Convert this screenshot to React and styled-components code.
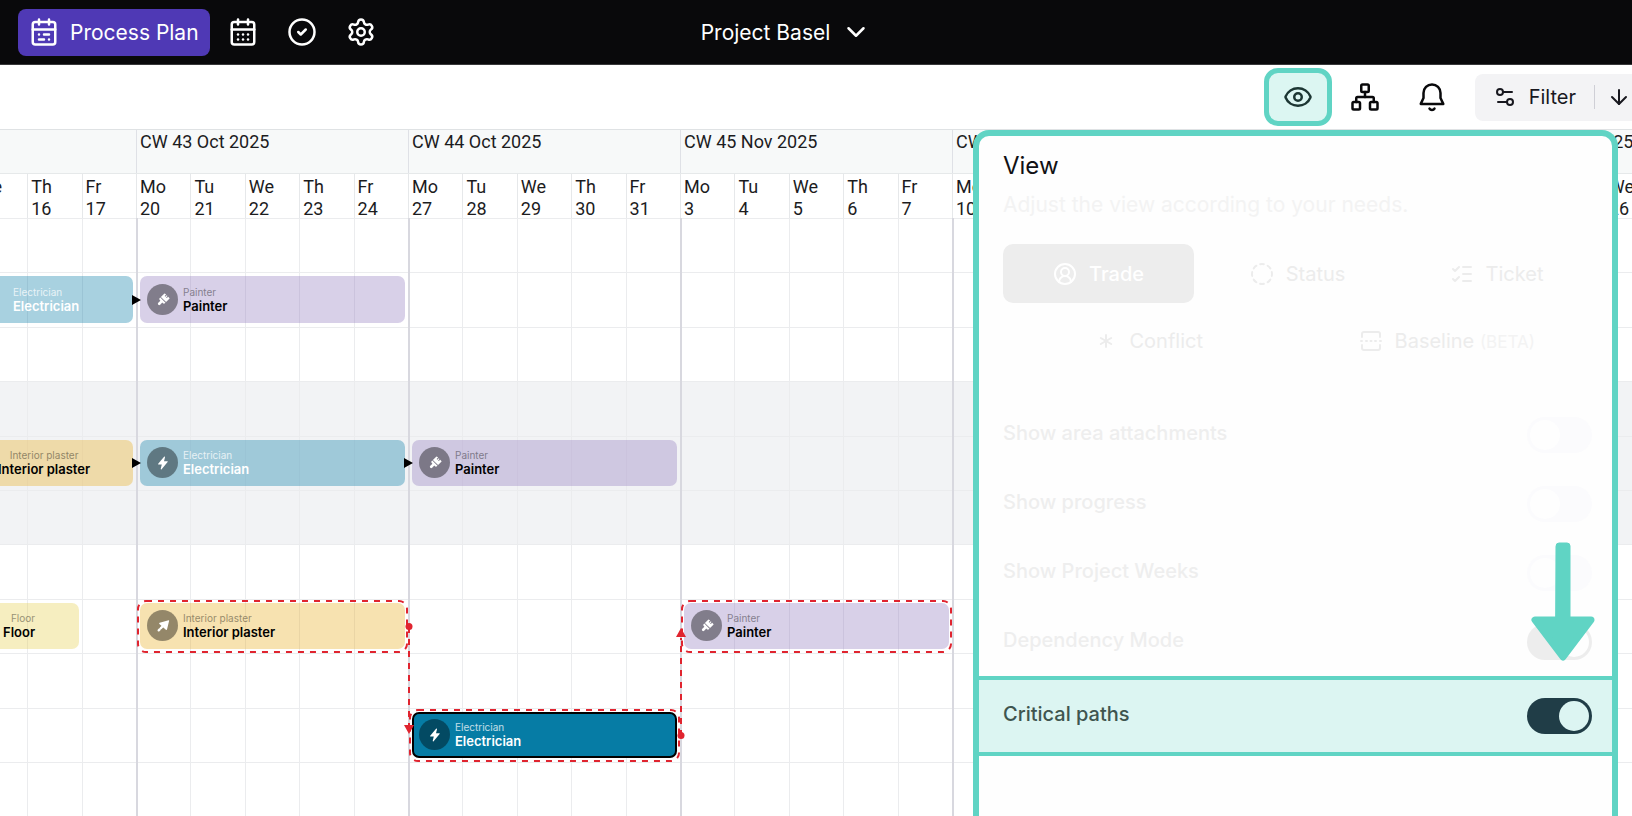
import React, {useState} from "react";
import styled, {createGlobalStyle} from "styled-components";
import {
    ArrowDown,
    Asterisk,
    CalendarDays,
    ChevronDown,
    CircleCheck,
    CircleDashed,
    CircleUserRound,
    Eye,
    ListChecks,
    Network,
    Settings,
    Settings2,
} from "lucide-react";

const TEAL = "#60d4c4";
const RED = "#e0242f";

const WEEKS = [
    {label: "CW 42 Oct 2025", dates: [13, 14, 15, 16, 17]},
    {label: "CW 43 Oct 2025", dates: [20, 21, 22, 23, 24]},
    {label: "CW 44 Oct 2025", dates: [27, 28, 29, 30, 31]},
    {label: "CW 45 Nov 2025", dates: [3, 4, 5, 6, 7]},
    {label: "CW 46 Nov 2025", dates: [10, 11, 12, 13, 14]},
    {label: "CW 47 Nov 2025", dates: [17, 18, 19, 20, 21]},
    {label: "CW 48 Nov 2025", dates: [24, 25, 26, 27, 28]},
];
const DAYS = ["Mo", "Tu", "We", "Th", "Fr"];
const ROWS = Array.from({length: 15}, (_, i) => i + 1);
const SHADED_ROWS = [4, 5, 6];

const TRADES = {
    electrician: {name: "Electrician", color: "6, 124, 165", text: "#ffffff", icon: "bolt"},
    painter: {name: "Painter", color: "144, 121, 189", text: "#000000", icon: "brush"},
    plaster: {name: "Interior plaster", color: "232, 172, 29", text: "#000000", icon: "trowel"},
    floor: {name: "Floor", color: "229, 206, 75", text: "#000000", icon: null},
};

// column and span count working days, inset is set where the bar starts off screen
const TASKS = [
    {trade: "electrician", row: 2, column: 1, span: 5, inset: 145, align: "flex-start"},
    {trade: "painter", row: 2, column: 6, span: 5},
    {trade: "plaster", row: 5, column: 1, span: 5, inset: 130, align: "center"},
    {trade: "electrician", row: 5, column: 6, span: 5},
    {trade: "painter", row: 5, column: 11, span: 5},
    {trade: "floor", row: 8, column: 1, span: 4, inset: 135, align: "flex-end"},
    {trade: "plaster", row: 8, column: 6, span: 5},
    {trade: "painter", row: 8, column: 16, span: 5},
    {trade: "electrician", row: 10, column: 11, span: 5, selected: true},
];

const TASK_ICONS = {
    bolt: <path d="M13.6 2.6 4.8 13.2c-.4.5-.1 1.1.5 1.1h4.900l-1.600 6.300c-.2.9.7 1.400 1.300.7l9-10.700c.4-.5.1-1.100-.5-1.100h-4.900l1.500-6.200c.2-.9-.8-1.400-1.400-.7Z"/>,
    brush: (
        <g transform="rotate(45 12 12)">
            <path d="M6.500 4a1 1 0 0 1 1-1h2v3h1.500V3h1.500v3H14V3h2.500a1 1 0 0 1 1 1v7h-11Z"/>
            <path d="M6.500 12.200h11v1.300a2 2 0 0 1-2 2h-1.500v4.500a2 2 0 0 1-4 0v-4.500H8.500a2 2 0 0 1-2-2Z"/>
        </g>
    ),
    trowel: (
        <>
            <path d="M20.400 3.400c.5-.1.9.3.8.8l-3.200 13.200c-.2.8-1.100 1-1.700.4L6.600 8.900c-.6-.6-.4-1.500.4-1.700Z"/>
            <path d="m12 12-3.200 3.200M7 17l-1.500 1.500" stroke="#ffffff" strokeWidth="3.400" strokeLinecap="round"/>
        </>
    ),
};

const CalendarPlanIcon = () => (
    <Stroke viewBox="0 0 24 24" $size={30}>
        <path d="M8 2v4M16 2v4M3 10h18"/>
        <rect x="3" y="4" width="18" height="18" rx="2"/>
        <path d="M8 14h.01M12 14h4M8 18h4M16 18h.01"/>
    </Stroke>
);

const BellIcon = () => (
    <Stroke viewBox="0 0 24 24" $size={30}>
        <path d="M3 17.500h18l-2.200-4.700V8.800a6.800 6.800 0 0 0-13.600 0v4Z"/>
        <path d="M10 21.300a2.300 2.300 0 0 0 4 0"/>
    </Stroke>
);

const BaselineIcon = () => (
    <Stroke viewBox="0 0 24 24" $size={24}>
        <path d="M3 8V5a2 2 0 0 1 2-2h14a2 2 0 0 1 2 2v3M3 16v3a2 2 0 0 0 2 2h14a2 2 0 0 0 2-2v-3"/>
        <path d="M2 12h1M7 12h1M11.500 12h1M16 12h1M21 12h1"/>
    </Stroke>
);

const Task = ({trade, row, column, span, inset, align, selected}) => {
    const {name, color, text, icon} = TRADES[trade];

    return (
        <Bar
            $row={row}
            $column={column}
            $span={span}
            $color={color}
            $text={text}
            $inset={inset}
            $selected={selected}
        >
            {!inset && (
                <TaskBadge>
                    <svg viewBox="0 0 24 24" width="16" height="16" fill="#ffffff">
                        {TASK_ICONS[icon]}
                    </svg>
                </TaskBadge>
            )}
            <Caption $align={align}>
                <TradeName $light={text === "#ffffff"}>{name}</TradeName>
                <TaskName>{name}</TaskName>
            </Caption>
        </Bar>
    );
};

const Dependencies = () => (
    <Links viewBox="0 0 1904 816">
        <path d="M268 77v10l9-5ZM268 240v10l9-5ZM540 240v10l9-5Z" fill="#000000"/>
        <g fill="none" stroke={RED} strokeWidth="2" strokeDasharray="6 6">
            <rect x="274" y="383" width="269" height="51" rx="8"/>
            <rect x="818" y="383" width="269" height="51" rx="8"/>
            <rect x="546" y="492" width="269" height="51" rx="8"/>
            <path d="M545 409v98M817 518v-98"/>
        </g>
        <g fill={RED}>
            <circle cx="545" cy="408.500" r="3.500"/>
            <circle cx="817" cy="517.500" r="3.500"/>
            <path d="M540 507h10l-5 9ZM812 419h10l-5-9Z"/>
        </g>
    </Links>
);

const Setting = ({id, label, checked, onChange, focus}) => (
    <SettingRow $focus={focus}>
        <SettingLabel htmlFor={id} $focus={focus}>{label}</SettingLabel>
        <Toggle id={id} type="checkbox" checked={checked} onChange={onChange} $focus={focus}/>
    </SettingRow>
);

const ViewPanel = () => {
    const [settings, setSettings] = useState({
        attachments: false,
        progress: false,
        weeks: false,
        dependency: true,
        critical: true,
    });
    const bind = (id) => ({
        id,
        checked: settings[id],
        onChange: () => setSettings({...settings, [id]: !settings[id]}),
    });

    return (
        <Panel>
            <PanelTop>
                <PanelTitle>View</PanelTitle>
                <PanelText>Adjust the view according to your needs.</PanelText>
                <Modes>
                    <Mode $active><CircleUserRound size={24}/>Trade</Mode>
                    <Mode><CircleDashed size={24}/>Status</Mode>
                    <Mode><ListChecks size={24}/>Ticket</Mode>
                    <Mode $wide><Asterisk size={24}/>Conflict</Mode>
                    <Mode $wide><BaselineIcon/><span>Baseline <Beta>(BETA)</Beta></span></Mode>
                </Modes>
            </PanelTop>
            <Setting {...bind("attachments")} label="Show area attachments"/>
            <Setting {...bind("progress")} label="Show progress"/>
            <Setting {...bind("weeks")} label="Show Project Weeks"/>
            <Setting {...bind("dependency")} label="Dependency Mode"/>
            <Setting {...bind("critical")} label="Critical paths" focus/>
            <Pointer viewBox="0 0 64 120">
                <path d="M25 10a3 3 0 0 1 3-3h8a3 3 0 0 1 3 3v75H25Z" strokeWidth="1"/>
                <path d="M4 84h56L32 121Z" strokeWidth="7"/>
            </Pointer>
        </Panel>
    );
};

const App = () => (
    <Page>
        <GlobalStyle/>
        <TopBar>
            <Nav>
                <NavButton $active><CalendarPlanIcon/>Process Plan</NavButton>
                <NavButton aria-label="Calendar"><CalendarDays size={30}/></NavButton>
                <NavButton aria-label="Tasks"><CircleCheck size={30}/></NavButton>
                <NavButton aria-label="Settings"><Settings size={30}/></NavButton>
            </Nav>
            <ProjectButton>Project Basel<ChevronDown size={30}/></ProjectButton>
        </TopBar>
        <Toolbar>
            <ToolButton aria-label="View"><Highlight/><Eye size={30}/></ToolButton>
            <ToolButton aria-label="Structure"><Network size={30}/></ToolButton>
            <ToolButton aria-label="Notifications"><BellIcon/></ToolButton>
            <FilterGroup>
                <FilterButton><Settings2 size={24}/>Filter</FilterButton>
                <Divider/>
                <SortButton aria-label="Sort"><ArrowDown size={24}/></SortButton>
            </FilterGroup>
        </Toolbar>
        <Content>
            <Timeline>
                <WeekHeader>
                    {WEEKS.map(({label}) => <Week key={label}>{label}</Week>)}
                </WeekHeader>
                <DayHeader>
                    {WEEKS.map(({dates}) => dates.map((date, i) => (
                        <Day key={DAYS[i] + date}>
                            <span>{DAYS[i]}</span>
                            <span>{date}</span>
                        </Day>
                    )))}
                </DayHeader>
                <Chart>
                    {ROWS.map((row) => <RowLine key={row} $row={row} $shaded={SHADED_ROWS.includes(row)}/>)}
                    {WEEKS.map(({dates}, week) => dates.map((date, i) => (
                        <ColumnLine key={week + "-" + date} $column={week * 5 + i + 1} $first={i === 0}/>
                    )))}
                    {TASKS.map((task) => <Task key={task.row + "-" + task.column} {...task}/>)}
                    <Dependencies/>
                </Chart>
            </Timeline>
            <ViewPanel/>
        </Content>
    </Page>
);

const GlobalStyle = createGlobalStyle`
  * {
    box-sizing: border-box;
  }

  body {
    margin: 0;
    background: #ffffff;
    font-family: Inter, "Liberation Sans", sans-serif;
  }

  button {
    padding: 0;
    border: none;
    background: none;
    color: inherit;
    font: inherit;
  }

  svg {
    flex: none;
  }
`;

const Page = styled.div`
  display: flex;
  flex-direction: column;
  height: 100vh;
  overflow: hidden;
`;

const Stroke = styled.svg`
  width: ${({$size}) => $size}px;
  height: ${({$size}) => $size}px;
  fill: none;
  stroke: currentColor;
  stroke-width: 2;
  stroke-linecap: round;
  stroke-linejoin: round;
`;

const TopBar = styled.header`
  display: grid;
  grid-template-columns: 1fr auto 1fr;
  align-items: center;
  flex: none;
  height: 65px;
  padding: 0 78px 0 18px;
  border-bottom: 1px solid #38383a;
  background: #09090b;
  color: #ffffff;
  font-size: 21px;
`;

const Nav = styled.nav`
  display: flex;
  align-items: center;
  gap: 7px;
`;

const NavButton = styled.button`
  display: flex;
  align-items: center;
  justify-content: center;
  gap: 11px;
  height: 47px;
  padding: 0 11px;
  border-radius: 8px;
  background: ${({$active}) => $active ? "#4f39b5" : "transparent"};
`;

const ProjectButton = styled.button`
  display: flex;
  align-items: center;
  gap: 11px;
`;

const Toolbar = styled.div`
  display: flex;
  align-items: center;
  justify-content: flex-end;
  gap: 19px;
  flex: none;
  height: 64px;
  color: #09090b;
`;

const ToolButton = styled.button`
  position: relative;
  display: grid;
  place-items: center;
  width: 48px;
  height: 48px;
`;

const Highlight = styled.span`
  position: absolute;
  inset: -5px -10px;
  border: 5px solid ${TEAL};
  border-radius: 14px;
  background: rgba(96, 212, 196, 0.22);
`;

const FilterGroup = styled.div`
  display: flex;
  align-items: center;
  height: 47px;
  border-radius: 8px 0 0 8px;
  background: #f3f3f5;
  color: #18181f;
  font-size: 20px;
`;

const FilterButton = styled.button`
  display: flex;
  align-items: center;
  gap: 12px;
  padding: 0 18px;
`;

const Divider = styled.span`
  width: 1px;
  height: 24px;
  background: #cfcfd6;
`;

const SortButton = styled.button`
  display: flex;
  padding: 0 1px 0 12px;
`;

const Content = styled.main`
  position: relative;
  flex: 1;
  min-height: 0;
`;

const Timeline = styled.div`
  width: 1904px;
  margin-left: -136px;
  color: #1c1c1e;
  font-family: Roboto, "Liberation Sans", sans-serif;
  font-size: 18px;
  line-height: 22px;
`;

const WeekHeader = styled.div`
  display: grid;
  grid-template-columns: repeat(7, 1fr);
  height: 45px;
  border-top: 1px solid #dfe2e4;
  border-bottom: 1px solid #e6e9ea;
  background: #f7f9f9;
`;

const Week = styled.div`
  padding: 1px 3px;
  border-left: 1px solid #dfe1e6;
`;

const DayHeader = styled.div`
  display: grid;
  grid-template-columns: repeat(35, 1fr);
  height: 44px;
`;

const Day = styled.div`
  display: flex;
  flex-direction: column;
  padding: 2px 3px;
  border-left: 1px solid #e6e8ea;
`;

const Chart = styled.div`
  position: relative;
  display: grid;
  grid-template-columns: repeat(35, 1fr);
  grid-template-rows: repeat(15, 1fr);
  height: 816px;
`;

const RowLine = styled.div`
  grid-area: ${({$row}) => $row} / 1 / auto / -1;
  border-top: 1px solid #ebecee;
  background: ${({$shaded}) => $shaded ? "#f2f3f5" : "transparent"};
`;

const ColumnLine = styled.div`
  grid-area: 1 / ${({$column}) => $column} / -1 / auto;
  border-left: ${({$first}) => $first ? "2px solid #d8d8df" : "1px solid #ebecee"};
`;

const Bar = styled.div`
  display: flex;
  align-items: center;
  gap: 5px;
  grid-area: ${({$row}) => $row} / ${({$column}) => $column} / auto / span ${({$span}) => $span};
  margin: 4px 3px 4px 4px;
  padding-left: ${({$inset, $selected}) => $inset || ($selected ? 5 : 7)}px;
  border: ${({$selected}) => $selected ? "2px solid #000000" : "none"};
  border-radius: 7px;
  background: rgba(${({$color}) => $color}, ${({$selected}) => $selected ? 1 : 0.35});
  color: ${({$text}) => $text};
  font-family: Inter, "Liberation Sans", sans-serif;
`;

const TaskBadge = styled.span`
  display: grid;
  place-items: center;
  width: 31px;
  height: 31px;
  border-radius: 50%;
  background: rgba(0, 0, 0, 0.4);
`;

const Caption = styled.div`
  display: flex;
  flex-direction: column;
  align-items: ${({$align}) => $align || "flex-start"};
`;

const TradeName = styled.span`
  font-size: 10px;
  line-height: 12px;
  opacity: ${({$light}) => $light ? 0.75 : 0.4};
`;

const TaskName = styled.span`
  font-size: 13px;
  font-weight: 600;
  line-height: 16px;
`;

const Links = styled.svg`
  position: absolute;
  inset: 0;
`;

const Panel = styled.section`
  position: absolute;
  top: 1px;
  right: 14px;
  bottom: 0;
  width: 645px;
  border: 6px solid ${TEAL};
  border-bottom: none;
  border-radius: 16px 16px 0 0;
  background: #fefefe;
`;

const PanelTop = styled.div`
  height: 264px;
  padding: 15px 20px 0 24px;
`;

const PanelTitle = styled.h2`
  margin: 0;
  color: #111114;
  font-size: 24px;
  font-weight: 400;
  line-height: 30px;
`;

const PanelText = styled.p`
  margin: 9px 0 24px;
  color: #f3f3f3;
  font-size: 21px;
  line-height: 30px;
`;

const Modes = styled.div`
  display: grid;
  grid-template-columns: repeat(6, 1fr);
  gap: 8px;
`;

const Mode = styled.button`
  display: flex;
  align-items: center;
  justify-content: center;
  gap: 12px;
  grid-column: span ${({$wide}) => $wide ? 3 : 2};
  height: 59px;
  border-radius: 10px;
  background: ${({$active}) => $active ? "#ededed" : "transparent"};
  color: ${({$active}) => $active ? "#ffffff" : "#ececec"};
  font-size: 20px;
  font-weight: ${({$active}) => $active ? 500 : 400};
`;

const Beta = styled.small`
  color: #f3f3f3;
  font-size: 17px;
`;

const SettingRow = styled.div`
  display: flex;
  align-items: center;
  justify-content: space-between;
  height: ${({$focus}) => $focus ? 80 : 69}px;
  padding: 0 20px 0 24px;
  border: solid ${TEAL};
  border-width: ${({$focus}) => $focus ? "4px 0" : "0"};
  background: ${({$focus}) => $focus ? "#dcf5f2" : "transparent"};
`;

const SettingLabel = styled.label`
  padding-bottom: 4px;
  color: ${({$focus}) => $focus ? "#3f554f" : "#eeeeee"};
  font-size: 20px;
  font-weight: 500;
`;

const Toggle = styled.input`
  appearance: none;
  display: flex;
  width: 65px;
  height: 36px;
  margin: 0;
  padding: 3px;
  border-radius: 18px;
  background: #fbfbfd;

  &::before {
    content: "";
    width: 30px;
    height: 30px;
    border-radius: 50%;
    background: ${({$focus}) => $focus ? "#dcf5f2" : "#fefefe"};
  }

  &:checked {
    justify-content: flex-end;
    background: ${({$focus}) => $focus ? "#203d47" : "#ededed"};
  }
`;

const Pointer = styled.svg`
  position: absolute;
  top: 397px;
  right: 17px;
  width: 64px;
  height: 126px;
  overflow: visible;
  fill: ${TEAL};
  stroke: ${TEAL};
  stroke-linecap: round;
  stroke-linejoin: round;
`;

export default App;
